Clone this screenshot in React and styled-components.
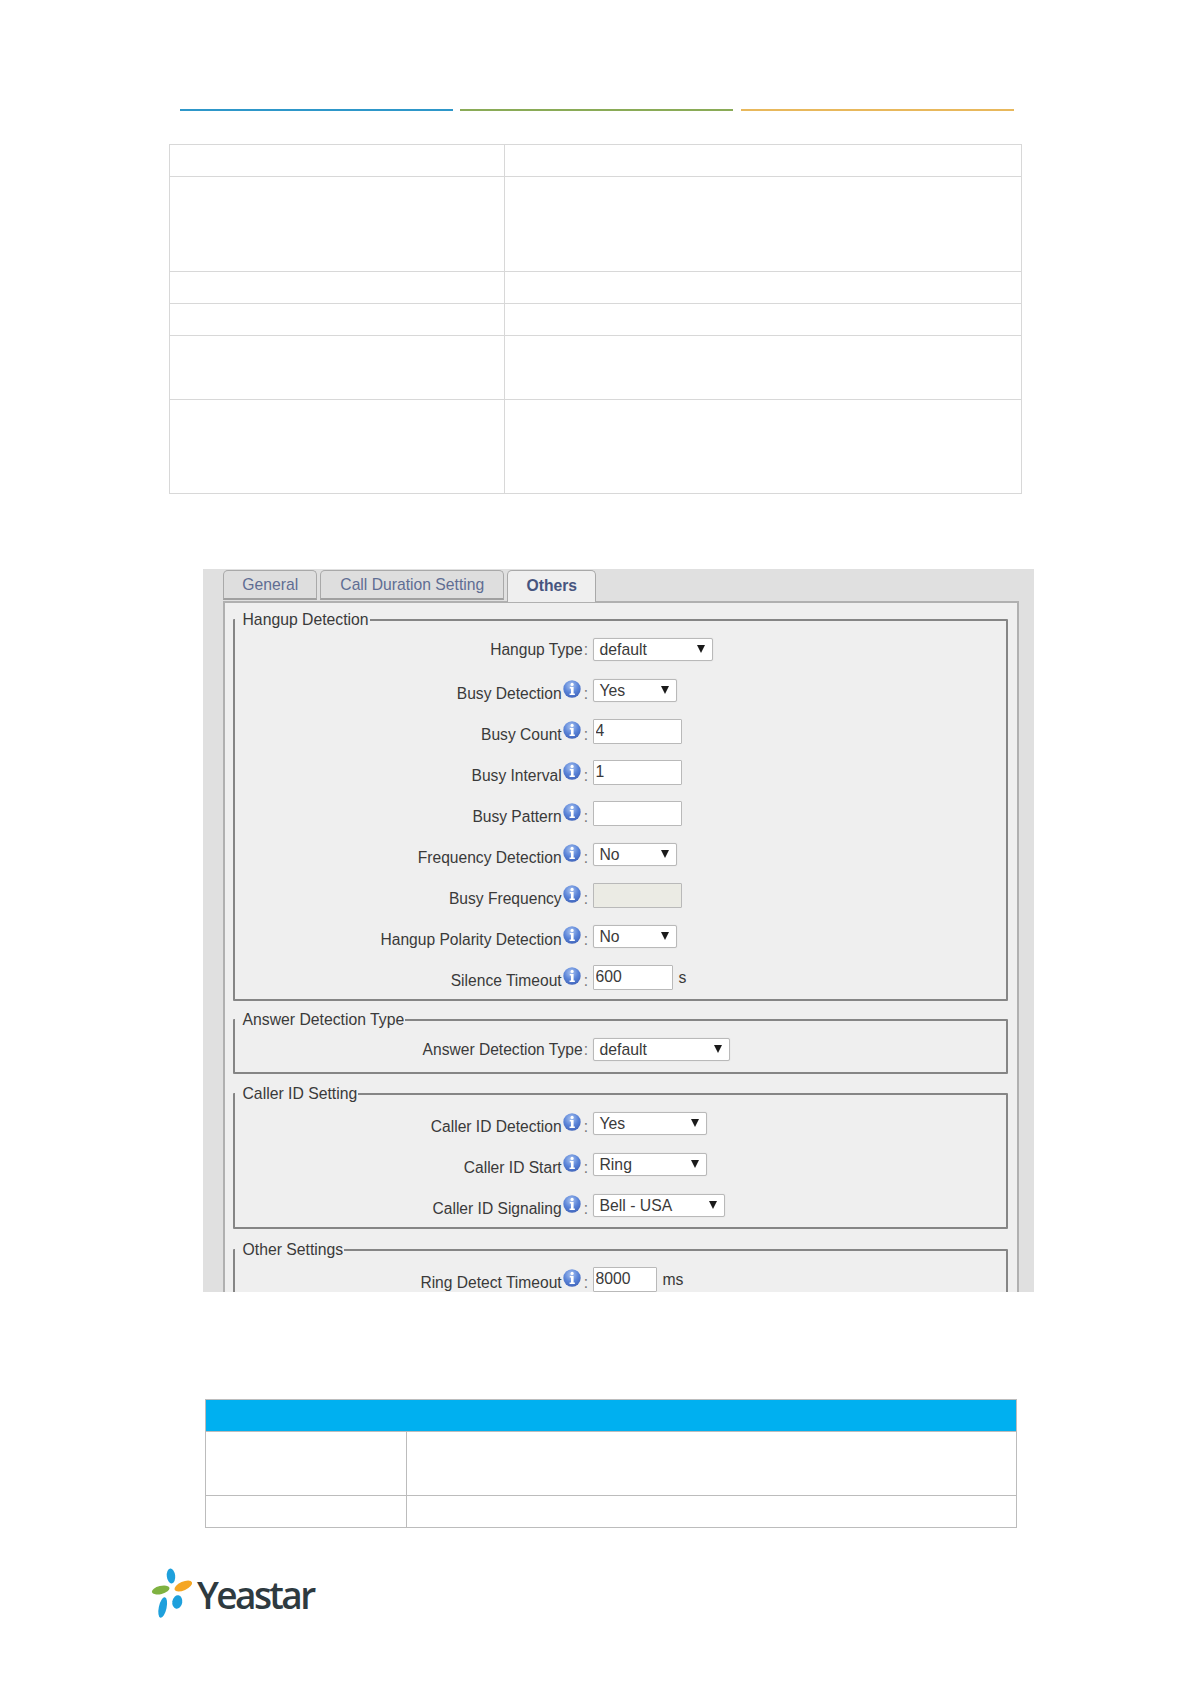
import React from 'react';
import styled, { createGlobalStyle } from 'styled-components';

const GlobalStyle = createGlobalStyle`
  body {
    margin: 0;
    background: #fff;
    font-family: "Liberation Sans", Arial, sans-serif;
  }
`;

const Page = styled.div`
  width: 1191px;
  height: 1684px;
  padding-top: 109px;
  box-sizing: border-box;
  overflow: hidden;
`;

const HeaderLines = styled.div`
  display: flex;
  gap: 7.5px;
  margin-left: 179.5px;
`;

const HeaderLine = styled.div`
  width: 273px;
  height: 2px;
  background: ${(p) => p.$color};
`;

const DocTable = styled.table`
  border-collapse: collapse;
  table-layout: fixed;
  margin-left: ${(p) => p.$left}px;
  margin-top: ${(p) => p.$top}px;
  width: ${(p) => p.$width}px;
  td {
    border: 1px solid ${(p) => p.$line};
    padding: 0;
  }
`;

const HeadCell = styled.td`
  background: #00b0f0;
`;

const Panel = styled.div`
  margin: 75px 0 0 203px;
  width: 831px;
  height: 723px;
  box-sizing: border-box;
  padding: 1px 15px 0 19.5px;
  background: #e0e0e0;
  overflow: hidden;
`;

const Tabs = styled.div`
  display: flex;
  gap: 3px;
  height: 32px;
  margin-bottom: -1px;
  position: relative;
  z-index: 1;
`;

const Tab = styled.div`
  width: ${(p) => p.$width}px;
  height: ${(p) => (p.$active ? 32 : 30)}px;
  box-sizing: border-box;
  padding: 0 0 ${(p) => (p.$active ? 2 : 0)}px 1.5px;
  display: flex;
  align-items: center;
  justify-content: center;
  font-size: 15.7px;
  font-weight: ${(p) => (p.$active ? 700 : 400)};
  color: ${(p) => (p.$active ? '#47557f' : '#5f6d93')};
  background: ${(p) => (p.$active ? '#efefef' : '#dedede')};
  border: 1px solid #a9a9a9;
  border-bottom: ${(p) => (p.$active ? 'none' : '2px solid #a0a0a0')};
  border-radius: 5px 5px 0 0;
`;

const Pane = styled.div`
  background: #efefef;
  border: 2px solid #b0b0b0;
  border-bottom: none;
  padding: 8px 9px 0 8px;
  height: 720px;
  box-sizing: border-box;
`;

const Group = styled.fieldset`
  margin: 0 0 ${(p) => p.$gap || 10}px;
  padding: 0 0 ${(p) => p.$pad || 0}px;
  min-width: 0;
  border: 2px solid #858585;
  border-radius: 1px;
`;

const GroupTitle = styled.legend`
  padding: 0 1px 0 8px;
  font-size: 15.75px;
  line-height: 18px;
  color: #3a3a3a;
`;

const Row = styled.div`
  display: flex;
  align-items: center;
  height: 41px;
`;

const LabelCell = styled.div`
  width: 354.5px;
  box-sizing: border-box;
  padding: ${(p) => (p.$info ? '6px' : '0')} 1px 0 0;
  margin-right: 3.5px;
  display: flex;
  justify-content: flex-end;
  align-items: center;
  font-size: 15.6px;
  color: #3a3a3a;
  white-space: nowrap;
`;

const Colon = styled.span`
  color: #777;
  margin-left: ${(p) => (p.$info ? 3 : 1)}px;
`;

const IconWrap = styled.svg`
  width: 18px;
  height: 18px;
  margin: -10px 0 0 1px;
  flex: none;
`;

const Select = styled.div`
  width: ${(p) => p.$width}px;
  height: 23px;
  box-sizing: border-box;
  background: #fff;
  border: 1px solid #b9b9b9;
  border-radius: 2px;
  box-shadow: 0 0 1px #ccc;
  padding: 0 7px 0 6px;
  display: flex;
  align-items: center;
  justify-content: space-between;
  font-size: 15.75px;
  color: #3a3a3a;
`;

const Arrow = styled.span`
  width: 0;
  height: 0;
  margin-top: -2px;
  border-left: 4px solid transparent;
  border-right: 4px solid transparent;
  border-top: 8px solid #1a1a1a;
`;

const Field = styled.input`
  width: ${(p) => p.$width}px;
  height: 25px;
  box-sizing: border-box;
  padding: 0 0 2px 2px;
  margin: 0;
  border: 1px solid #b9b9b9;
  border-radius: 1px;
  outline: none;
  font-family: inherit;
  font-size: 15.75px;
  color: #3a3a3a;
  background: ${(p) => (p.disabled ? '#ebebe4' : '#fff')};
`;

const Unit = styled.span`
  margin-left: 6px;
  font-size: 15.75px;
  color: #3a3a3a;
`;

const Logo = styled.div`
  display: flex;
  align-items: flex-start;
  margin: 37px 0 0 151px;
`;

const LogoMark = styled.svg`
  width: 46px;
  height: 56px;
  flex: none;
`;

const LogoText = styled.span`
  margin-top: 7px;
  font-family: "Open Sans", sans-serif;
  font-size: 37px;
  line-height: 46px;
  letter-spacing: -2.6px;
  font-weight: 600;
  color: #2e3a3f;
`;

const InfoIcon = () => (
  <IconWrap viewBox="0 0 17 17">
    <defs>
      <radialGradient id="infoFill" cx="45%" cy="30%" r="75%">
        <stop offset="0%" stopColor="#a9c3f0" />
        <stop offset="55%" stopColor="#5a84d8" />
        <stop offset="100%" stopColor="#3f62b8" />
      </radialGradient>
    </defs>
    <circle cx="8.5" cy="8.5" r="8.2" fill="url(#infoFill)" />
    <circle cx="8.6" cy="4.2" r="1.5" fill="#fff" />
    <path d="M6.4 6.7h3.6v6h1.2v1.4H6.2v-1.4h1.3V8.1H6.4z" fill="#fff" />
  </IconWrap>
);

const FormRow = ({ label, info, children }) => (
  <Row>
    <LabelCell $info={info}>
      {label}
      {info && <InfoIcon />}
      <Colon $info={info}>:</Colon>
    </LabelCell>
    {children}
  </Row>
);

const Drop = ({ width, value }) => (
  <Select $width={width}>
    {value}
    <Arrow />
  </Select>
);

const App = () => {
  return (
    <Page>
      <GlobalStyle />
      <HeaderLines>
        <HeaderLine $color="#2e97c9" />
        <HeaderLine $color="#8aab57" />
        <HeaderLine $color="#e8b85c" />
      </HeaderLines>

      <DocTable $left={169} $top={33} $width={853} $line="#d8d8d8">
        <colgroup>
          <col style={{ width: 335 }} />
          <col />
        </colgroup>
        <tbody>
          {[32, 95, 32, 32, 64, 94].map((h, i) => (
            <tr key={i} style={{ height: h }}>
              <td />
              <td />
            </tr>
          ))}
        </tbody>
      </DocTable>

      <Panel>
        <Tabs>
          <Tab $width={94}>General</Tab>
          <Tab $width={184}>Call Duration Setting</Tab>
          <Tab $width={89} $active>Others</Tab>
        </Tabs>
        <Pane>
          <Group $pad={1}>
            <GroupTitle>Hangup Detection</GroupTitle>
            <FormRow label="Hangup Type"><Drop width={120} value="default" /></FormRow>
            <FormRow label="Busy Detection" info><Drop width={84} value="Yes" /></FormRow>
            <FormRow label="Busy Count" info><Field $width={89} defaultValue="4" /></FormRow>
            <FormRow label="Busy Interval" info><Field $width={89} defaultValue="1" /></FormRow>
            <FormRow label="Busy Pattern" info><Field $width={89} /></FormRow>
            <FormRow label="Frequency Detection" info><Drop width={84} value="No" /></FormRow>
            <FormRow label="Busy Frequency" info><Field $width={89} disabled /></FormRow>
            <FormRow label="Hangup Polarity Detection" info><Drop width={84} value="No" /></FormRow>
            <FormRow label="Silence Timeout" info>
              <Field $width={80} defaultValue="600" />
              <Unit>s</Unit>
            </FormRow>
          </Group>
          <Group $pad={2} $gap={11}>
            <GroupTitle>Answer Detection Type</GroupTitle>
            <FormRow label="Answer Detection Type"><Drop width={137} value="default" /></FormRow>
          </Group>
          <Group $pad={1} $gap={12}>
            <GroupTitle>Caller ID Setting</GroupTitle>
            <FormRow label="Caller ID Detection" info><Drop width={114} value="Yes" /></FormRow>
            <FormRow label="Caller ID Start" info><Drop width={114} value="Ring" /></FormRow>
            <FormRow label="Caller ID Signaling" info><Drop width={132} value="Bell - USA" /></FormRow>
          </Group>
          <Group $pad={8}>
            <GroupTitle>Other Settings</GroupTitle>
            <FormRow label="Ring Detect Timeout" info>
              <Field $width={64} defaultValue="8000" />
              <Unit>ms</Unit>
            </FormRow>
          </Group>
        </Pane>
      </Panel>

      <DocTable $left={205} $top={107} $width={812} $line="#bcbcbc">
        <colgroup>
          <col style={{ width: 201 }} />
          <col />
        </colgroup>
        <tbody>
          <tr style={{ height: 32 }}>
            <HeadCell colSpan={2} />
          </tr>
          <tr style={{ height: 64 }}>
            <td />
            <td />
          </tr>
          <tr style={{ height: 32 }}>
            <td />
            <td />
          </tr>
        </tbody>
      </DocTable>

      <Logo>
        <LogoMark viewBox="0 0 46 56">
          <ellipse cx="20" cy="11" rx="4.2" ry="7.5" fill="#1ea0dc" transform="rotate(-6 20 11)" />
          <ellipse cx="9.7" cy="25" rx="9" ry="4" fill="#7fb241" transform="rotate(-14 9.7 25)" />
          <ellipse cx="32.3" cy="21" rx="9.5" ry="4.3" fill="#f5a623" transform="rotate(-24 32.3 21)" />
          <ellipse cx="11.7" cy="42.5" rx="3.9" ry="10.5" fill="#1ea0dc" transform="rotate(12 11.7 42.5)" />
          <ellipse cx="26.3" cy="37" rx="5" ry="6.8" fill="#1ea0dc" transform="rotate(10 26.3 37)" />
        </LogoMark>
        <LogoText>Yeastar</LogoText>
      </Logo>
    </Page>
  );
};

export default App;
